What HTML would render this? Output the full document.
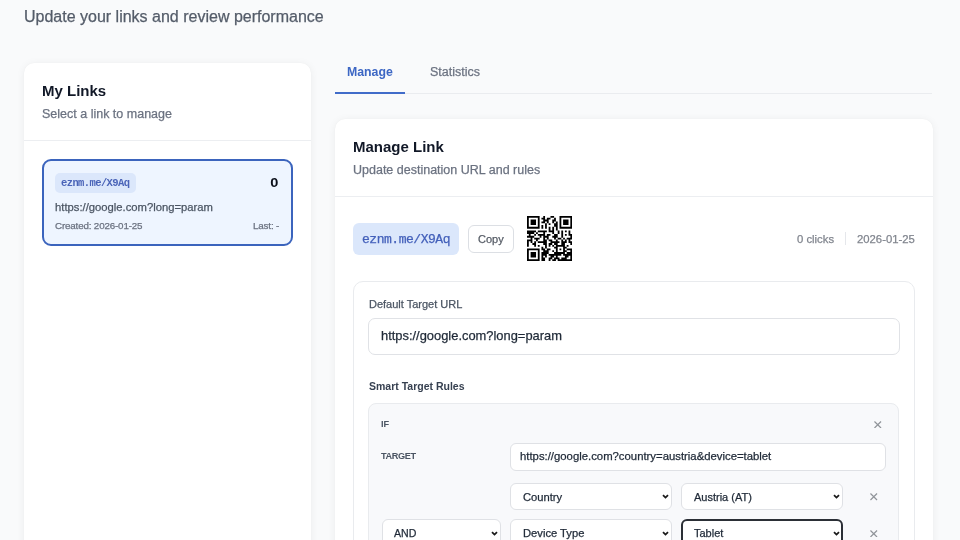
<!DOCTYPE html>
<html><head><meta charset="utf-8">
<style>
*{box-sizing:border-box;margin:0;padding:0}
html,body{width:960px;height:540px;overflow:hidden;background:#f9fafb;font-family:"Liberation Sans",sans-serif}
.a{position:absolute}
.t{position:absolute;line-height:1;white-space:nowrap;will-change:transform;-webkit-text-stroke:0.25px currentColor}
.b{font-weight:bold;-webkit-text-stroke:0}
.card{position:absolute;background:#fff;border-radius:10px;box-shadow:0 0 1px rgba(0,0,0,0.05),0 1px 8px rgba(0,0,0,0.06)}
.sel{position:absolute;background:#fff;border:1px solid #dfe1e5;border-radius:6px}
.chev{position:absolute;width:7px;height:5px}
.x{position:absolute;width:7.5px;height:7.5px}
</style></head><body>

<div class="t" style="left:24px;top:9px;font-size:16px;color:#545c69">Update your links and review performance</div>

<!-- left card -->
<div class="card" style="left:24px;top:62.5px;width:287px;height:500px"></div>
<div class="t b" style="left:42px;top:83.1px;font-size:15px;color:#111827">My Links</div>
<div class="t" style="left:42px;top:107.7px;font-size:12.5px;color:#6b7280">Select a link to manage</div>
<div class="a" style="left:24px;top:140px;width:287px;height:1px;background:#eceef1"></div>

<div class="a" style="left:42px;top:159px;width:251px;height:86.5px;border:2px solid #3b64bd;border-radius:9px;background:#eef5ff"></div>
<div class="a" style="left:55.4px;top:172.5px;width:80.6px;height:20px;border-radius:5px;background:#dbe7fb"></div>
<div class="t" style="left:61.4px;top:178.2px;font-size:10.5px;letter-spacing:-0.6px;color:#4a64b8;font-weight:bold;-webkit-text-stroke:0;font-family:'Liberation Mono',monospace">eznm.me/X9Aq</div>
<div class="t b" style="right:681.3px;top:175.8px;font-size:13px;color:#0b0f19;transform:scaleX(1.12);transform-origin:right">0</div>
<div class="t" style="left:55.2px;top:202px;font-size:11.25px;color:#4b5563">https://google.com?long=param</div>
<div class="t" style="left:55.2px;top:221px;font-size:9.8px;letter-spacing:-0.16px;color:#6b7280">Created: 2026-01-25</div>
<div class="t" style="right:681.1px;top:221px;font-size:9.8px;letter-spacing:-0.16px;color:#6b7280">Last: -</div>

<!-- tabs -->
<div class="t b" style="left:347.2px;top:66.4px;font-size:12.3px;color:#3d67c4">Manage</div>
<div class="t" style="left:429.7px;top:66.2px;font-size:12.5px;color:#6b7280">Statistics</div>
<div class="a" style="left:335px;top:93px;width:597px;height:1px;background:#eaecef"></div>
<div class="a" style="left:335px;top:92px;width:70px;height:2px;background:#416cc9"></div>

<!-- manage card -->
<div class="card" style="left:335px;top:119px;width:598px;height:500px"></div>
<div class="t b" style="left:353px;top:138.7px;font-size:15px;color:#111827">Manage Link</div>
<div class="t" style="left:353px;top:163.6px;font-size:12.5px;color:#6b7280">Update destination URL and rules</div>
<div class="a" style="left:335px;top:196px;width:598px;height:1px;background:#eceef1"></div>

<div class="a" style="left:353px;top:222.6px;width:106px;height:32.4px;border-radius:6px;background:#dbe7fb"></div>
<div class="t" style="left:362px;top:233.1px;font-size:13px;letter-spacing:-0.47px;color:#4360ba;font-family:'Liberation Mono',monospace">eznm.me/X9Aq</div>
<div class="a" style="left:468px;top:225px;width:46px;height:28px;border:1px solid #dcdfe4;border-radius:6px;background:#fff"></div>
<div class="t" style="left:477.8px;top:234.1px;font-size:11px;color:#565c66">Copy</div>
<svg class="a" style="left:526.9px;top:216px" width="45.15" height="45.15" viewBox="0 0 25 25"><path d="M0 0h7v1h-7zM9 0h1v1h-1zM13 0h2v1h-2zM18 0h7v1h-7zM0 1h1v1h-1zM6 1h1v1h-1zM8 1h2v1h-2zM11 1h2v1h-2zM15 1h1v1h-1zM18 1h1v1h-1zM24 1h1v1h-1zM0 2h1v1h-1zM2 2h3v1h-3zM6 2h1v1h-1zM9 2h3v1h-3zM14 2h2v1h-2zM18 2h1v1h-1zM20 2h3v1h-3zM24 2h1v1h-1zM0 3h1v1h-1zM2 3h3v1h-3zM6 3h1v1h-1zM8 3h2v1h-2zM11 3h1v1h-1zM14 3h1v1h-1zM16 3h1v1h-1zM18 3h1v1h-1zM20 3h3v1h-3zM24 3h1v1h-1zM0 4h1v1h-1zM2 4h3v1h-3zM6 4h1v1h-1zM10 4h1v1h-1zM12 4h1v1h-1zM15 4h2v1h-2zM18 4h1v1h-1zM20 4h3v1h-3zM24 4h1v1h-1zM0 5h1v1h-1zM6 5h1v1h-1zM8 5h1v1h-1zM10 5h1v1h-1zM15 5h2v1h-2zM18 5h1v1h-1zM24 5h1v1h-1zM0 6h7v1h-7zM8 6h1v1h-1zM10 6h1v1h-1zM12 6h1v1h-1zM14 6h1v1h-1zM16 6h1v1h-1zM18 6h7v1h-7zM12 7h1v1h-1zM14 7h1v1h-1zM16 7h1v1h-1zM0 8h5v1h-5zM6 8h5v1h-5zM12 8h3v1h-3zM17 8h1v1h-1zM19 8h1v1h-1zM21 8h1v1h-1zM23 8h1v1h-1zM0 9h4v1h-4zM5 9h1v1h-1zM9 9h1v1h-1zM14 9h1v1h-1zM17 9h1v1h-1zM19 9h1v1h-1zM23 9h1v1h-1zM1 10h1v1h-1zM4 10h1v1h-1zM6 10h4v1h-4zM11 10h2v1h-2zM15 10h2v1h-2zM19 10h1v1h-1zM21 10h1v1h-1zM23 10h2v1h-2zM0 11h4v1h-4zM7 11h1v1h-1zM9 11h3v1h-3zM14 11h3v1h-3zM19 11h1v1h-1zM24 11h1v1h-1zM2 12h1v1h-1zM4 12h3v1h-3zM9 12h1v1h-1zM11 12h1v1h-1zM15 12h1v1h-1zM17 12h2v1h-2zM20 12h1v1h-1zM22 12h3v1h-3zM0 13h3v1h-3zM5 13h1v1h-1zM9 13h2v1h-2zM12 13h2v1h-2zM16 13h1v1h-1zM19 13h1v1h-1zM21 13h1v1h-1zM23 13h1v1h-1zM0 14h1v1h-1zM2 14h1v1h-1zM4 14h1v1h-1zM6 14h5v1h-5zM13 14h5v1h-5zM19 14h3v1h-3zM23 14h2v1h-2zM0 15h1v1h-1zM3 15h2v1h-2zM9 15h2v1h-2zM12 15h2v1h-2zM15 15h2v1h-2zM19 15h2v1h-2zM24 15h1v1h-1zM0 16h1v1h-1zM4 16h1v1h-1zM6 16h1v1h-1zM10 16h1v1h-1zM12 16h1v1h-1zM14 16h1v1h-1zM16 16h5v1h-5zM22 16h1v1h-1zM8 17h1v1h-1zM10 17h1v1h-1zM15 17h2v1h-2zM20 17h2v1h-2zM0 18h7v1h-7zM8 18h2v1h-2zM11 18h2v1h-2zM16 18h1v1h-1zM18 18h1v1h-1zM20 18h1v1h-1zM22 18h3v1h-3zM0 19h1v1h-1zM6 19h1v1h-1zM9 19h3v1h-3zM14 19h1v1h-1zM16 19h1v1h-1zM20 19h2v1h-2zM24 19h1v1h-1zM0 20h1v1h-1zM2 20h3v1h-3zM6 20h1v1h-1zM8 20h4v1h-4zM15 20h6v1h-6zM22 20h3v1h-3zM0 21h1v1h-1zM2 21h3v1h-3zM6 21h1v1h-1zM8 21h3v1h-3zM12 21h7v1h-7zM20 21h5v1h-5zM0 22h1v1h-1zM2 22h3v1h-3zM6 22h1v1h-1zM8 22h1v1h-1zM10 22h1v1h-1zM13 22h2v1h-2zM16 22h1v1h-1zM21 22h2v1h-2zM24 22h1v1h-1zM0 23h1v1h-1zM6 23h1v1h-1zM8 23h2v1h-2zM12 23h2v1h-2zM15 23h3v1h-3zM19 23h3v1h-3zM24 23h1v1h-1zM0 24h7v1h-7zM8 24h2v1h-2zM12 24h1v1h-1zM14 24h2v1h-2zM17 24h8v1h-8z" fill="#000"/></svg>

<div class="t" style="left:797.3px;top:233.9px;font-size:11.3px;color:#80858e">0 clicks</div>
<div class="a" style="left:845px;top:232.3px;width:1px;height:12.4px;background:#e5e7eb"></div>
<div class="t" style="left:856.8px;top:233.9px;font-size:11.3px;color:#80858e">2026-01-25</div>

<!-- inner panel -->
<div class="a" style="left:353px;top:281px;width:562px;height:400px;border:1px solid #e9ebee;border-radius:10px;background:#fff"></div>
<div class="t" style="left:368.7px;top:298.5px;font-size:11px;color:#4b5563">Default Target URL</div>
<div class="a" style="left:368px;top:317.5px;width:531.5px;height:37px;border:1px solid #e0e2e6;border-radius:7px;background:#fff"></div>
<div class="t" style="left:381.3px;top:330px;font-size:12.9px;color:#1f2937">https://google.com?long=param</div>
<div class="t b" style="left:368.7px;top:380.9px;font-size:10.5px;color:#374151">Smart Target Rules</div>

<!-- rule box -->
<div class="a" style="left:368px;top:403.3px;width:531px;height:300px;border:1px solid #e9ebee;border-radius:8px;background:#f8f9fb"></div>
<div class="t b" style="left:381.3px;top:419.6px;font-size:9.2px;color:#4b5563">IF</div>
<div class="t b" style="left:381.3px;top:451.6px;font-size:9.2px;letter-spacing:-0.38px;color:#4b5563">TARGET</div>
<div class="sel" style="left:510.3px;top:442.5px;width:375.7px;height:28px"></div>
<div class="t" style="left:519.5px;top:451px;font-size:11.33px;color:#1f2937">https://google.com?country=austria&amp;device=tablet</div>

<div class="sel" style="left:510.3px;top:483.4px;width:161.5px;height:26.5px"></div>
<div class="t" style="left:522.5px;top:491.8px;font-size:11.2px;color:#1f2937">Country</div>
<div class="sel" style="left:681.4px;top:483.3px;width:162px;height:26.5px"></div>
<div class="t" style="left:693.9px;top:491.8px;font-size:11px;color:#1f2937">Austria (AT)</div>

<div class="sel" style="left:381.5px;top:519px;width:119px;height:30px"></div>
<div class="t" style="left:394.2px;top:527.6px;font-size:10.6px;color:#1f2937">AND</div>
<div class="sel" style="left:510.3px;top:519px;width:161.5px;height:30px"></div>
<div class="t" style="left:522.5px;top:528.2px;font-size:11.2px;color:#1f2937">Device Type</div>
<div class="sel" style="left:681.4px;top:519px;width:162px;height:30px;border:2px solid #2b2f36"></div>
<div class="t" style="left:693.9px;top:528.2px;font-size:11px;color:#1f2937">Tablet</div>

<!-- chevrons -->
<svg class="chev" style="left:661.8px;top:494.1px" viewBox="0 0 7 5"><path d="M1 1.1 L3.5 3.6 L6 1.1" fill="none" stroke="#1a1a1a" stroke-width="1.75"/></svg>
<svg class="chev" style="left:832.8px;top:494.1px" viewBox="0 0 7 5"><path d="M1 1.1 L3.5 3.6 L6 1.1" fill="none" stroke="#1a1a1a" stroke-width="1.75"/></svg>
<svg class="chev" style="left:490.5px;top:530.6px" viewBox="0 0 7 5"><path d="M1 1.1 L3.5 3.6 L6 1.1" fill="none" stroke="#1a1a1a" stroke-width="1.75"/></svg>
<svg class="chev" style="left:661.8px;top:530.6px" viewBox="0 0 7 5"><path d="M1 1.1 L3.5 3.6 L6 1.1" fill="none" stroke="#1a1a1a" stroke-width="1.75"/></svg>
<svg class="chev" style="left:832.8px;top:530.6px" viewBox="0 0 7 5"><path d="M1 1.1 L3.5 3.6 L6 1.1" fill="none" stroke="#1a1a1a" stroke-width="1.75"/></svg>

<!-- x icons -->
<svg class="x" style="left:874px;top:420.6px" viewBox="0 0 8 8"><path d="M0.5 0.5 L7.5 7.5 M7.5 0.5 L0.5 7.5" stroke="#909499" stroke-width="1.25"/></svg>
<svg class="x" style="left:870.2px;top:493.1px" viewBox="0 0 8 8"><path d="M0.5 0.5 L7.5 7.5 M7.5 0.5 L0.5 7.5" stroke="#909499" stroke-width="1.25"/></svg>
<svg class="x" style="left:870.2px;top:529.9px" viewBox="0 0 8 8"><path d="M0.5 0.5 L7.5 7.5 M7.5 0.5 L0.5 7.5" stroke="#909499" stroke-width="1.25"/></svg>

</body></html>
